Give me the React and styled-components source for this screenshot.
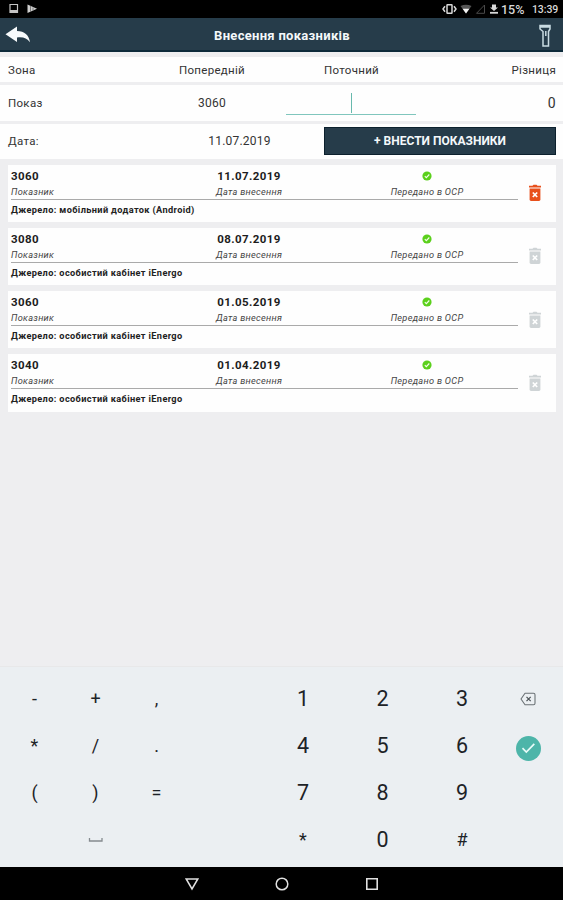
import React from 'react';
import styled, { createGlobalStyle } from 'styled-components';

const GlobalStyle = createGlobalStyle`
  * {
    box-sizing: border-box;
  }

  body {
    margin: 0;
    background: #eeeeee;
    font-family: Roboto, 'Noto Sans', sans-serif;
    color: #333;
  }
`;

const Screen = styled.div`
  display: flex;
  flex-direction: column;
  height: 900px;
  background: #eeeef0;
  overflow: hidden;
`;

const StatusBar = styled.div`
  display: flex;
  align-items: center;
  flex: none;
  height: 18px;
  padding: 0 5px 0 9px;
  background: #000;
  color: #d8d8d8;
  font-size: 12px;
  font-weight: 500;
`;

const StatusSpacer = styled.div`
  flex: 1;
`;

const Battery = styled.span`
  width: 25px;
  margin: 0 6px 0 1px;
  font-size: 12.5px;
  white-space: nowrap;
`;

const Clock = styled.span`
  width: 26px;
  font-size: 10.5px;
  letter-spacing: -0.1px;
`;

const Toolbar = styled.header`
  display: flex;
  align-items: center;
  justify-content: space-between;
  flex: none;
  height: 34px;
  padding: 0 11px 0 5px;
  background: #263c4a;
  border-bottom: 2px solid #0d2a3a;
`;

const Title = styled.h1`
  margin: 2px 6px 0 0;
  color: #f4f8fa;
  font-size: 13px;
  font-weight: 700;
  letter-spacing: 0.3px;
`;

const Row = styled.div`
  display: grid;
  grid-template-columns: 134px 140px 139px 1fr;
  align-items: center;
  flex: none;
  height: ${({ $height }) => $height}px;
  margin-top: ${({ $gap }) => $gap}px;
  padding: 0 7px 0 8px;
  background: #fefefe;
`;

const DateRow = styled(Row)`
  grid-template-columns: 147px 169px 1fr;
`;

const Cell = styled.span`
  font-size: ${({ $size }) => $size || 11.5}px;
  letter-spacing: ${({ $spacing }) => $spacing || 0.3}px;
  text-align: ${({ $align }) => $align || 'left'};
`;

const Field = styled.div`
  display: flex;
  align-items: center;
  justify-content: center;
  width: 130px;
  height: 24px;
  margin-left: 4px;
  border-bottom: 1px solid #80c6bd;
`;

const Caret = styled.span`
  width: 1px;
  height: 20px;
  background: #68b9ad;
`;

const SubmitButton = styled.button`
  height: 28px;
  padding: 0;
  border: 1px solid #0c202d;
  background: #263c4a;
  color: #f4f8fa;
  font-family: inherit;
  font-size: 12px;
  font-weight: 700;
`;

const History = styled.main`
  display: flex;
  flex-direction: column;
  flex: 1;
  gap: 6px;
  padding: 6px 7px 0 8px;
`;

const Card = styled.article`
  display: flex;
  height: 57.3px;
  padding: 3px 0 0 3px;
  background: #fefefe;
`;

const CardBody = styled.div`
  width: 507px;
`;

const Reading = styled.div`
  display: grid;
  grid-template-columns: 149px 178px 178px;
  height: 32px;
  border-bottom: 1px solid #aaa;
`;

const ReadingCell = styled.div`
  display: flex;
  flex-direction: column;
  align-items: ${({ $center }) => ($center ? 'center' : 'flex-start')};
`;

const Value = styled.strong`
  display: flex;
  align-items: center;
  height: 16px;
  color: #1c1c1c;
  font-size: 11.5px;
  font-weight: 700;
  letter-spacing: 0.4px;
`;

const Label = styled.em`
  color: #444;
  font-size: 9.2px;
  line-height: 15px;
  letter-spacing: 0.3px;
`;

const Source = styled.div`
  color: #222;
  font-size: 9.2px;
  font-weight: 700;
  line-height: 20px;
  letter-spacing: 0.37px;
`;

const CardAction = styled.div`
  display: flex;
  align-items: center;
  justify-content: center;
  flex: 1;
  height: 51px;
  padding-right: 4px;
`;

const Keyboard = styled.div`
  display: grid;
  grid-template-columns: 61px 61px 61px 76px 80px 79px 80px 52px;
  grid-template-rows: repeat(4, 47px);
  flex: none;
  height: 201px;
  padding: 8px 0 0 4px;
  background: #ebeff2;
  border-top: 1px solid #e8e8e9;
`;

const Key = styled.div`
  display: flex;
  align-items: center;
  justify-content: center;
  grid-column: ${({ $col }) => $col};
  grid-row: ${({ $row }) => $row};
  color: #1d2327;
  font-size: ${({ $size }) => $size || 18}px;
`;

const EnterKey = styled.div`
  display: flex;
  align-items: center;
  justify-content: center;
  width: 25px;
  height: 25px;
  margin-top: 5px;
  border-radius: 50%;
  background: #4db5a9;
`;

const NavBar = styled.nav`
  display: flex;
  align-items: center;
  justify-content: center;
  gap: 76px;
  flex: none;
  height: 33px;
  background: #000;
`;

const StatusLeftIcons = () => (
  <svg width="30" height="12" viewBox="0 0 30 12">
    <path d="M1 1.5h7.5v8H1z" fill="none" stroke="#c4c4c4" strokeWidth="1.2" />
    <path d="M1 7h7.5v2.5H1z" fill="#c4c4c4" />
    <path d="M18.5 1.5l9.5 4.2-9.5 4.3z" fill="#cfcfcf" />
    <path d="M21.5 3v6M24 4.5v3" stroke="#666" strokeWidth="0.8" />
  </svg>
);

const StatusRightIcons = () => (
  <svg width="58" height="14" viewBox="0 0 58 14">
    <rect x="5" y="2.8" width="5" height="8.4" rx="0.5" fill="none" stroke="#d8d8d8" strokeWidth="1.5" />
    <path d="M3 4.2L1 7l2 2.8M12 4.2L14 7l-2 2.8" fill="none" stroke="#d8d8d8" strokeWidth="1.5" />
    <path d="M18.5 4q5.5-2.5 11 0L24 11.5z" fill="#555" />
    <path d="M20.6 6.8h6.8L24 11.5z" fill="#f2f2f2" />
    <path d="M42.5 3v8.3h-8z" fill="none" stroke="#4a4a4a" strokeWidth="1" />
    <path d="M50 2.5h4v3h2L52 9l-4-3.5h2z" fill="#d8d8d8" />
    <path d="M48 10.8h8" stroke="#d8d8d8" strokeWidth="1.8" />
  </svg>
);

const BackIcon = () => (
  <svg width="26" height="18" viewBox="0 0 26 18">
    <path
      d="M0.5 9.3L12 1.5v4.4c7.5 0 12 4 13 11.3-3-4-7-5.500-13-4.700v4.500z"
      fill="#f7fafc"
    />
  </svg>
);

const FlashlightIcon = () => (
  <svg width="13" height="25" viewBox="0 0 13 25">
    <path d="M1 3.5h10v3.500l-1.500 2.500v14.500H4V9.500L1 7z" fill="none" stroke="#c9dbe2" strokeWidth="1.500" />
    <path d="M1 4.500h10" stroke="#c9dbe2" strokeWidth="2.500" />
    <path d="M6.800 9v5" stroke="#c9dbe2" strokeWidth="1.500" />
  </svg>
);

const DoneIcon = () => (
  <svg width="10" height="10" viewBox="0 0 10 10">
    <circle cx="5" cy="5" r="4.6" fill="#5bd01c" />
    <path d="M2.8 5.2l1.5 1.5 3-3.2" fill="none" stroke="#f4ffe9" strokeWidth="1.1" />
  </svg>
);

const TrashIcon = ({ color }) => (
  <svg width="14" height="18" viewBox="0 0 14 18">
    <path d="M1 1.800h3.500l1-1h3l1 1H13v1.700H1z" fill={color} />
    <path d="M1.600 4.600h10.800v11q0 1.400-1.400 1.400H3q-1.400 0-1.400-1.400z" fill={color} />
    <path d="M4.800 8.500l4.400 4.500M9.200 8.500L4.800 13" stroke="#fff" strokeWidth="1.700" />
  </svg>
);

const BackspaceIcon = () => (
  <svg width="16" height="14" viewBox="0 0 16 14">
    <path
      d="M5 1.2h8.500q1.500 0 1.500 1.500v8.600q0 1.500-1.500 1.500H5L1 7z"
      fill="none"
      stroke="#6b7276"
      strokeWidth="1.1"
      strokeLinejoin="round"
    />
    <path d="M6.500 4.800l4.200 4.400M10.700 4.800L6.500 9.200" stroke="#4b5256" strokeWidth="1.200" />
  </svg>
);

const SpaceIcon = () => (
  <svg width="16" height="6" viewBox="0 0 16 6">
    <path d="M1.500 1v3h12.500V1" fill="none" stroke="#858b8f" strokeWidth="1.300" />
  </svg>
);

const readings = [
  { value: '3060', date: '11.07.2019', source: 'мобільний додаток (Android)', removable: true },
  { value: '3080', date: '08.07.2019', source: 'особистий кабінет iEnergo' },
  { value: '3060', date: '01.05.2019', source: 'особистий кабінет iEnergo' },
  { value: '3040', date: '01.04.2019', source: 'особистий кабінет iEnergo' },
];

const symbolKeys = [
  ['-', '+', ','],
  ['*', '/', '.'],
  ['(', ')', '='],
];

const digitKeys = [
  ['1', '2', '3'],
  ['4', '5', '6'],
  ['7', '8', '9'],
  ['*', '0', '#'],
];

const ReadingCard = ({ value, date, source, removable }) => (
  <Card>
    <CardBody>
      <Reading>
        <ReadingCell>
          <Value>{value}</Value>
          <Label>Показник</Label>
        </ReadingCell>
        <ReadingCell $center>
          <Value>{date}</Value>
          <Label>Дата внесення</Label>
        </ReadingCell>
        <ReadingCell $center>
          <Value><DoneIcon /></Value>
          <Label>Передано в ОСР</Label>
        </ReadingCell>
      </Reading>
      <Source>Джерело: {source}</Source>
    </CardBody>
    <CardAction>
      <TrashIcon color={removable ? '#e8501c' : '#cfd4d6'} />
    </CardAction>
  </Card>
);

const App = () => {
  return (
    <Screen>
      <GlobalStyle />
      <StatusBar>
        <StatusLeftIcons />
        <StatusSpacer />
        <StatusRightIcons />
        <Battery>15%</Battery>
        <Clock>13:39</Clock>
      </StatusBar>
      <Toolbar>
        <BackIcon />
        <Title>Внесення показників</Title>
        <FlashlightIcon />
      </Toolbar>
      <Row $height={25} $gap={5}>
        <Cell>Зона</Cell>
        <Cell $align="center">Попередній</Cell>
        <Cell $align="center">Поточний</Cell>
        <Cell $align="right">Різниця</Cell>
      </Row>
      <Row $height={36} $gap={3}>
        <Cell>Показ</Cell>
        <Cell $align="center" $size={12}>3060</Cell>
        <Field><Caret /></Field>
        <Cell $align="right" $size={14}>0</Cell>
      </Row>
      <DateRow $height={34.5} $gap={3}>
        <Cell>Дата:</Cell>
        <Cell $align="center" $size={12} $spacing={0.2}>11.07.2019</Cell>
        <SubmitButton>+ ВНЕСТИ ПОКАЗНИКИ</SubmitButton>
      </DateRow>
      <History>
        {readings.map((reading) => (
          <ReadingCard key={reading.date} {...reading} />
        ))}
      </History>
      <Keyboard>
        {symbolKeys.map((row, r) =>
          row.map((key, c) => (
            <Key key={key} $row={r + 1} $col={c + 1}>{key}</Key>
          ))
        )}
        <Key $row={4} $col={2}><SpaceIcon /></Key>
        {digitKeys.map((row, r) =>
          row.map((key, c) => (
            <Key key={key} $size={/\d/.test(key) ? 21.5 : 18} $row={r + 1} $col={c + 5}>{key}</Key>
          ))
        )}
        <Key $row={1} $col={8}><BackspaceIcon /></Key>
        <Key $row={2} $col={8}>
          <EnterKey>
            <svg width="15" height="12" viewBox="0 0 15 12">
              <path d="M1.5 6.2l3.8 3.8 8-8.2" fill="none" stroke="#e8fbf8" strokeWidth="1.7" />
            </svg>
          </EnterKey>
        </Key>
      </Keyboard>
      <NavBar>
        <svg width="14" height="14" viewBox="0 0 14 14">
          <path d="M1.2 2h11.6L7 12z" fill="none" stroke="#e0e0e0" strokeWidth="1.5" />
        </svg>
        <svg width="14" height="14" viewBox="0 0 14 14">
          <circle cx="7" cy="7" r="5.8" fill="none" stroke="#e0e0e0" strokeWidth="1.5" />
        </svg>
        <svg width="14" height="14" viewBox="0 0 14 14">
          <path d="M1.8 1.8h10.4v10.4H1.8z" fill="none" stroke="#e0e0e0" strokeWidth="1.6" />
        </svg>
      </NavBar>
    </Screen>
  );
};

export default App;
